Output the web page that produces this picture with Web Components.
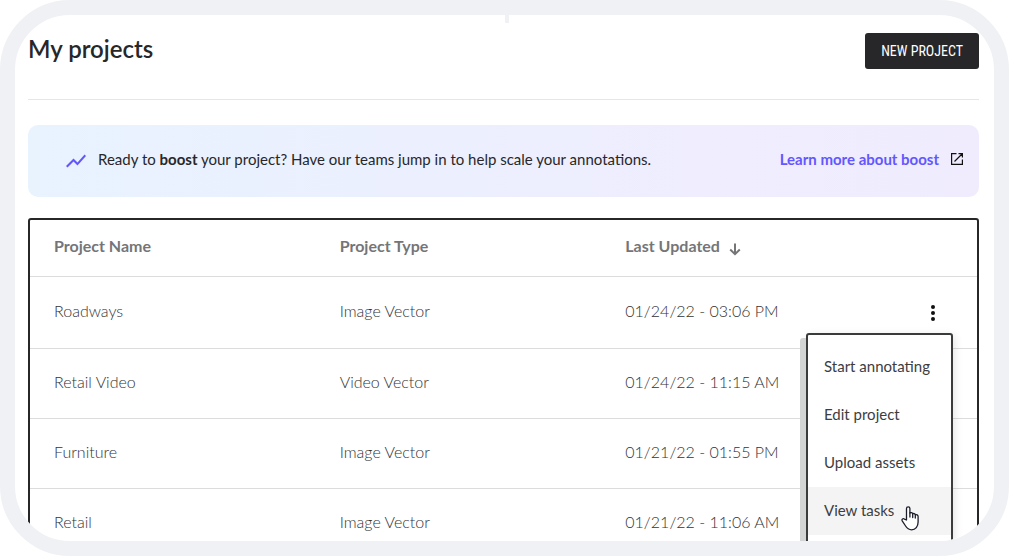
<!DOCTYPE html>
<html lang="en">
<head>
<meta charset="utf-8">
<meta name="viewport" content="width=device-width, initial-scale=1">
<title>My projects</title>
<style>
  body {
    margin: 0;
    background: #fff;
    color: #27272a;
    font-family: Lato, "Open Sans", sans-serif;
  }
</style>
</head>
<body>
<app-frame>
  <page-header heading="My projects">
    <action-button>NEW PROJECT</action-button>
  </page-header>
  <boost-banner href="#boost" label="Learn more about boost">
    Ready to <b>boost</b> your project? Have our teams jump in to help scale your annotations.
  </boost-banner>
  <projects-table></projects-table>
</app-frame>

<script>
class AppFrame extends HTMLElement {
  constructor() {
    super();
    this.attachShadow({ mode: 'open' });
    this.shadowRoot.innerHTML = `
      <style>
        :host {
          display: block;
          position: relative;
          box-sizing: border-box;
          height: 100vh;
          overflow: hidden;
          border: 15px solid #f0f1f4;
          border-radius: 70px;
        }
        main {
          padding: 18px 15px 0 13px;
        }
        .notch {
          position: absolute;
          top: 0;
          left: 50%;
          width: 4px;
          height: 8px;
          background: #f0f1f4;
        }
      </style>
      <div class="notch"></div>
      <main><slot></slot></main>
    `;
  }
}

class PageHeader extends HTMLElement {
  constructor() {
    super();
    this.attachShadow({ mode: 'open' });
  }

  connectedCallback() {
    this.shadowRoot.innerHTML = `
      <style>
        :host {
          display: flex;
          align-items: center;
          justify-content: space-between;
          padding-bottom: 30px;
          border-bottom: 1px solid #e6e6e6;
        }
        h1 {
          margin: 0;
          padding-bottom: 4px;
          font-size: 24px;
          line-height: 32px;
          font-weight: 600;
        }
      </style>
      <h1>${this.getAttribute('heading')}</h1>
      <slot></slot>
    `;
  }
}

class ActionButton extends HTMLElement {
  constructor() {
    super();
    this.attachShadow({ mode: 'open' });
    this.shadowRoot.innerHTML = `
      <style>
        :host {
          display: block;
        }
        button {
          display: block;
          height: 36px;
          padding: 0 16px;
          border: 0;
          border-radius: 3px;
          background: #27272a;
          color: #fff;
          font: 14px "Roboto Condensed", "Liberation Sans Narrow", Roboto, sans-serif;
          cursor: pointer;
        }
      </style>
      <button type="button"><slot></slot></button>
    `;
  }
}

class BoostBanner extends HTMLElement {
  constructor() {
    super();
    this.attachShadow({ mode: 'open' });
  }

  connectedCallback() {
    this.shadowRoot.innerHTML = `
      <style>
        :host {
          display: flex;
          align-items: center;
          box-sizing: border-box;
          min-height: 72px;
          margin: 25px 0 21px;
          padding: 0 16px 4px 36px;
          border-radius: 10px;
          background: linear-gradient(90deg, #e8f3fe, #ebf0fe 35%, #efedfe 70%, #f0ecfd);
          font-size: 15px;
          line-height: 20px;
        }
        p {
          flex: 1;
          margin: 0 16px 0 10px;
        }
        a {
          display: flex;
          align-items: center;
          gap: 12px;
          color: #6257ff;
          font-weight: 700;
          text-decoration: none;
        }
        svg {
          display: block;
          flex: none;
        }
        .trend {
          margin-top: 4px;
        }
      </style>
      <svg class="trend" width="24" height="24" viewBox="0 0 24 24" fill="#6257ff" aria-hidden="true">
        <path d="M3.5 18.49l6-6.01 4 4L22 6.92l-1.41-1.41-7.09 7.97-4-4L2 16.99z"/>
      </svg>
      <p><slot></slot></p>
      <a href="${this.getAttribute('href')}">
        ${this.getAttribute('label')}
        <svg width="12" height="12" viewBox="0 0 12 12" fill="none" stroke="#111" stroke-width="1.2" aria-hidden="true">
          <path d="M5.500 .6H.6v10.800h10.800V6.500M7.500 .6h3.900V4.500M11 1L3.500 8.500"/>
        </svg>
      </a>
    `;
  }
}

class RowMenu extends HTMLElement {
  constructor() {
    super();
    this.attachShadow({ mode: 'open' });
    this.items = ['Start annotating', 'Edit project', 'Upload assets', 'View tasks'];
    this.current = 'View tasks';
  }

  connectedCallback() {
    this.render();
    this.menu = this.shadowRoot.querySelector('.menu');
    this.toggle = this.shadowRoot.querySelector('.toggle');
    this.toggle.addEventListener('click', () => this.handleToggle());
  }

  render() {
    this.shadowRoot.innerHTML = `
      <style>
        :host {
          display: inline-block;
          position: relative;
          vertical-align: middle;
        }
        button {
          border: 0;
          background: none;
          color: inherit;
          font: inherit;
          cursor: pointer;
        }
        .toggle {
          display: block;
          padding: 8px;
        }
        svg {
          display: block;
        }
        .menu {
          position: absolute;
          z-index: 1;
          top: 100%;
          right: 0;
          box-sizing: border-box;
          width: 147px;
          padding: 8px 0;
          border: 2px solid #3a3b3b;
          border-radius: 3px;
          background: #fff;
          box-shadow: -6px 5px 0 #d3d4d4, 2px 2px 8px rgba(0, 0, 0, 0.1);
          color: #3d3d3f;
          font-size: 15px;
          font-weight: 400;
        }
        .menu[hidden] {
          display: none;
        }
        .item {
          display: block;
          width: 100%;
          height: 48px;
          padding: 0 0 2px 16px;
          text-align: left;
          white-space: nowrap;
        }
        .item.current {
          background: #f4f4f4;
        }
        .pointer {
          position: absolute;
          right: 32px;
          bottom: 12px;
        }
      </style>
      <button class="toggle" type="button" aria-label="Project actions" aria-expanded="true">
        <svg width="24" height="24" viewBox="0 0 24 24" fill="#111" aria-hidden="true">
          <circle cx="12" cy="6" r="2"/><circle cx="12" cy="12" r="2"/><circle cx="12" cy="18" r="2"/>
        </svg>
      </button>
      <div class="menu" role="menu">
        ${this.items
          .map((t) => `<button class="item${t === this.current ? ' current' : ''}" type="button" role="menuitem">${t}</button>`)
          .join('')}
        <svg class="pointer" width="18" height="25" viewBox="0 0 18 25" fill="#fff" stroke="#1c1d2b" stroke-width="1.300" stroke-linejoin="round" stroke-linecap="round" aria-hidden="true">
          <path d="M5.500 14V2.500a1.700 1.700 0 0 1 3.400 0V7c.8-.7 2.500-.5 2.800.8.9-.6 2.300-.2 2.600.9 1.300-.5 2.800.3 2.800 1.700V16c0 4.500-2.600 7.800-6.500 7.800-3.300 0-4.600-1.500-6-3.800L1.200 14.800c-.8-1.400.9-2.800 2.200-1.700z"/>
          <path d="M8.900 7v4M11.700 7.800V11.500M14.300 8.700v3.300" fill="none"/>
        </svg>
      </div>
    `;
  }

  handleToggle() {
    this.menu.hidden = !this.menu.hidden;
    this.toggle.setAttribute('aria-expanded', String(!this.menu.hidden));
  }
}

class ProjectsTable extends HTMLElement {
  constructor() {
    super();
    this.attachShadow({ mode: 'open' });
    this.projects = [
      { name: 'Roadways', type: 'Image Vector', updated: '01/24/22 - 03:06 PM', menu: true },
      { name: 'Retail Video', type: 'Video Vector', updated: '01/24/22 - 11:15 AM' },
      { name: 'Furniture', type: 'Image Vector', updated: '01/21/22 - 01:55 PM' },
      { name: 'Retail', type: 'Image Vector', updated: '01/21/22 - 11:06 AM' },
    ];
  }

  connectedCallback() {
    this.render();
  }

  render() {
    this.shadowRoot.innerHTML = `
      <style>
        :host {
          display: block;
          border: 2px solid #27272a;
          border-radius: 3px;
        }
        table {
          width: 100%;
          table-layout: fixed;
          border-collapse: separate;
          border-spacing: 0;
          font-size: 16px;
          line-height: 20px;
        }
        th, td {
          box-sizing: border-box;
          height: 70px;
          padding: 0 0 4px 24px;
          border-bottom: 1px solid #dcdcdc;
          text-align: left;
        }
        thead th, thead td {
          height: 57px;
          color: #757577;
          font-weight: 700;
        }
        td {
          color: #333335;
          font-weight: 300;
        }
        tbody tr:first-child td {
          height: 72px;
        }
        tr > :last-child {
          width: 90px;
          padding: 0 0 0 2px;
          text-align: center;
        }
        .sort {
          margin-left: 8px;
          vertical-align: -4px;
        }
      </style>
      <table>
        <thead>
          <tr>
            <th scope="col">Project Name</th>
            <th scope="col">Project Type</th>
            <th scope="col" aria-sort="descending">Last Updated<svg class="sort" width="14" height="14" viewBox="0 0 14 14" fill="none" stroke="#757577" stroke-width="2" aria-hidden="true"><path d="M7 1.500V12M2.200 7.500L7 12.200 11.800 7.500"/></svg></th>
            <td></td>
          </tr>
        </thead>
        <tbody>
          ${this.projects
            .map((p) => `
              <tr>
                <td>${p.name}</td>
                <td>${p.type}</td>
                <td>${p.updated}</td>
                <td>${p.menu ? '<row-menu></row-menu>' : ''}</td>
              </tr>`)
            .join('')}
        </tbody>
      </table>
    `;
  }
}

customElements.define('app-frame', AppFrame);
customElements.define('page-header', PageHeader);
customElements.define('action-button', ActionButton);
customElements.define('boost-banner', BoostBanner);
customElements.define('row-menu', RowMenu);
customElements.define('projects-table', ProjectsTable);
</script>
</body>
</html>
